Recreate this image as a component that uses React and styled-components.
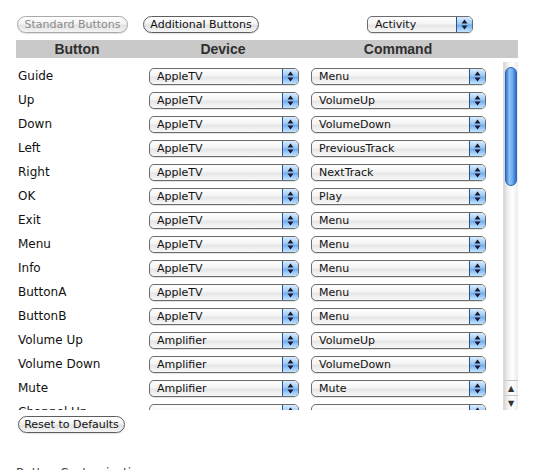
import styled, { createGlobalStyle } from "styled-components";

const GlobalStyle = createGlobalStyle`
  body {
    margin: 0;
    background: #fff;
    font-family: "DejaVu Sans", "Liberation Sans", sans-serif;
    overflow: hidden;
  }
`;

const rows = [
  ["Guide", "AppleTV", "Menu"],
  ["Up", "AppleTV", "VolumeUp"],
  ["Down", "AppleTV", "VolumeDown"],
  ["Left", "AppleTV", "PreviousTrack"],
  ["Right", "AppleTV", "NextTrack"],
  ["OK", "AppleTV", "Play"],
  ["Exit", "AppleTV", "Menu"],
  ["Menu", "AppleTV", "Menu"],
  ["Info", "AppleTV", "Menu"],
  ["ButtonA", "AppleTV", "Menu"],
  ["ButtonB", "AppleTV", "Menu"],
  ["Volume Up", "Amplifier", "VolumeUp"],
  ["Volume Down", "Amplifier", "VolumeDown"],
  ["Mute", "Amplifier", "Mute"],
  ["Channel Up", "", ""],
];

const Page = styled.div`
  padding: 16px 0 0 16px;
  width: 502px;
`;

const TopBar = styled.div`
  display: flex;
  align-items: center;
  gap: 15px;
  padding-left: 1px;
  height: 17px;
`;

const PillButton = styled.button`
  box-sizing: border-box;
  width: ${(p) => p.$w}px;
  height: 17px;
  padding: 0;
  border-radius: 9px;
  border: 1px solid ${(p) => (p.disabled ? "#a9a9a9" : "#5e5e5e")};
  background: linear-gradient(#ffffff 0%, #f3f3f3 45%, #e2e2e2 55%, #f4f4f4 100%);
  box-shadow: 0 1px 1px rgba(0, 0, 0, 0.12);
  font-family: "DejaVu Sans", sans-serif;
  font-size: 11px;
  line-height: 15px;
  color: ${(p) => (p.disabled ? "#8a8a8a" : "#111")};
`;

const Popup = styled.div`
  box-sizing: border-box;
  width: ${(p) => p.$w}px;
  height: 17px;
  margin-left: ${(p) => p.$ml || 0}px;
  display: flex;
  border: 1px solid #6c6c6c;
  border-radius: 5px;
  overflow: hidden;
  background: linear-gradient(#ffffff 0%, #f5f5f5 45%, #e6e6e6 55%, #f7f7f7 100%);
  box-shadow: 0 1px 1px rgba(0, 0, 0, 0.12);
`;

const PopupText = styled.span`
  flex: 1;
  padding-left: 7px;
  font-size: 11px;
  line-height: 15px;
  color: #111;
  white-space: nowrap;
  overflow: hidden;
`;

const PopupArrows = styled.span`
  width: 15px;
  display: flex;
  align-items: center;
  justify-content: center;
  border-left: 1px solid #2f4f8f;
  background: linear-gradient(#d9ecff 0%, #9cc9f4 45%, #6eaeee 55%, #c4e6ff 100%);
`;

const Arrows = () => (
  <svg width="7" height="11" viewBox="0 0 7 11">
    <path d="M3.5 0.5 L6.5 4.5 L0.5 4.5 Z" fill="#1a1a2e" />
    <path d="M3.5 10.5 L6.5 6.5 L0.5 6.5 Z" fill="#1a1a2e" />
  </svg>
);

const Select = ({ value, w, ml }) => (
  <Popup $w={w} $ml={ml}>
    <PopupText>{value}</PopupText>
    <PopupArrows>
      <Arrows />
    </PopupArrows>
  </Popup>
);

const Header = styled.div`
  margin-top: 7px;
  height: 18px;
  display: grid;
  grid-template-columns: 122px 170px 180px 1fr;
  background: #c9c9c9;
`;

const HeadCell = styled.div`
  text-align: center;
  font-family: "Liberation Sans", Arial, sans-serif;
  font-weight: bold;
  font-size: 14px;
  line-height: 18px;
  color: #2f2f2f;
`;

const Frame = styled.div`
  margin-top: 4px;
  height: 348px;
  display: flex;
`;

const List = styled.div`
  flex: 1;
  overflow: hidden;
  padding-top: 2px;
`;

const Row = styled.div`
  height: 24px;
  display: grid;
  grid-template-columns: 119px 150px 175px;
  column-gap: 12px;
  align-items: center;
  padding-left: 2px;
`;

const Label = styled.span`
  font-size: 12px;
  color: #111;
  white-space: nowrap;
`;

const ScrollBar = styled.div`
  width: 15px;
  display: flex;
  flex-direction: column;
  background: linear-gradient(to right, #d6d6d6 0%, #eeeeee 25%, #ffffff 60%, #ececec 100%);
  border-left: 1px solid #dcdcdc;
  box-sizing: border-box;
`;

const Track = styled.div`
  flex: 1;
  padding: 5px 1px 0 1px;
`;

const Thumb = styled.div`
  height: 119px;
  border-radius: 7px;
  border: 1px solid #2f63b5;
  box-sizing: border-box;
  background: linear-gradient(to right, #3b78d3 0%, #8fc3f6 35%, #6aa9ec 65%, #2f6ccb 100%);
`;

const ArrowBtn = styled.div`
  height: 14px;
  display: flex;
  align-items: center;
  justify-content: center;
  border-top: 1px solid #c8c8c8;
  color: #333;
  font-size: 8px;
`;

const Footer = styled.div`
  display: flex;
  margin-top: 6px;
  padding-left: 2px;
`;

const Caption = styled.div`
  margin-top: 33px;
  font-size: 12px;
  color: #444;
`;

export default function App() {
  return (
    <>
      <GlobalStyle />
      <Page>
        <TopBar>
          <PillButton $w={111} disabled>
            Standard Buttons
          </PillButton>
          <PillButton $w={116}>Additional Buttons</PillButton>
          <Select value="Activity" w={106} ml={93} />
        </TopBar>
        <Header>
          <HeadCell>Button</HeadCell>
          <HeadCell>Device</HeadCell>
          <HeadCell>Command</HeadCell>
        </Header>
        <Frame>
          <List>
            {rows.map(([name, device, command]) => (
              <Row key={name}>
                <Label>{name}</Label>
                <Select value={device} w={150} />
                <Select value={command} w={175} />
              </Row>
            ))}
          </List>
          <ScrollBar>
            <Track>
              <Thumb />
            </Track>
            <ArrowBtn>▲</ArrowBtn>
            <ArrowBtn>▼</ArrowBtn>
          </ScrollBar>
        </Frame>
        <Footer>
          <PillButton $w={107}>Reset to Defaults</PillButton>
        </Footer>
        <Caption>Button Customization</Caption>
      </Page>
    </>
  );
}
